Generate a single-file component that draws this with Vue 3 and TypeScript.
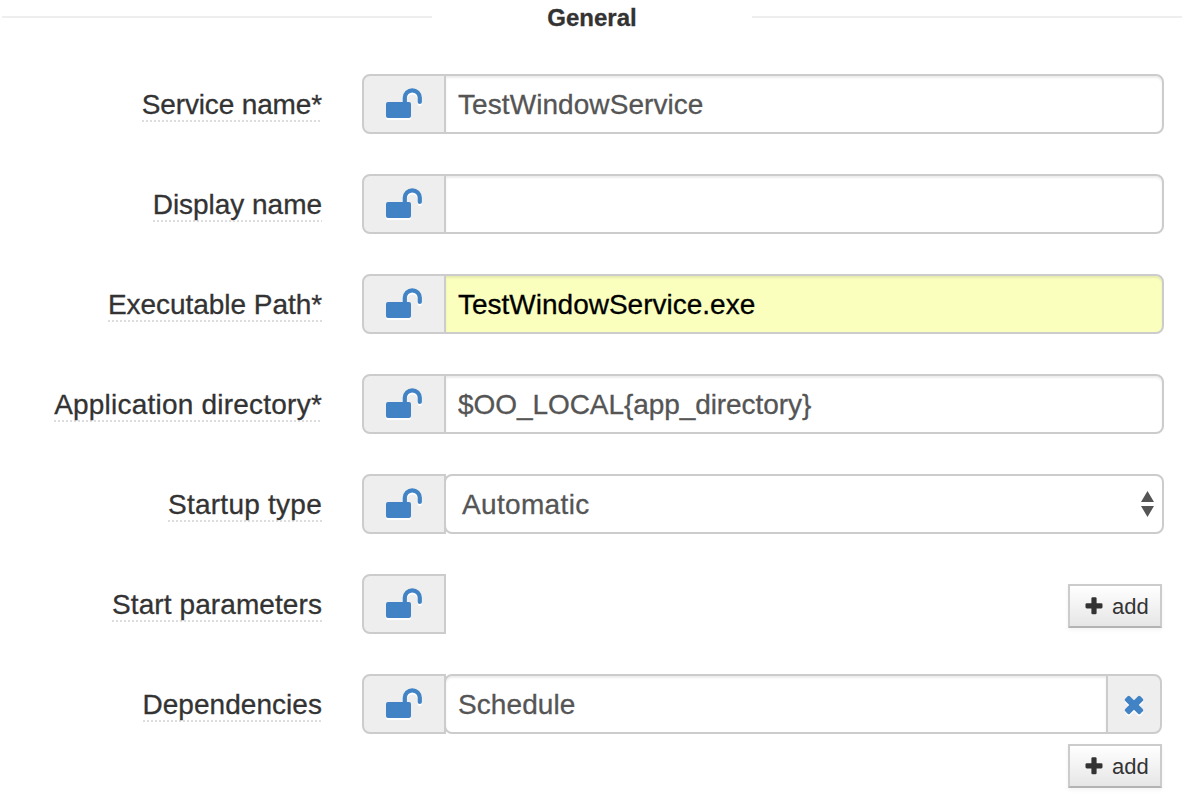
<script setup lang="ts">
import { ref } from 'vue'

type Kind = 'text' | 'select' | 'params' | 'list'

interface Field {
  label: string
  kind: Kind
  value: string
  tracking: number
  valueTracking: number
  highlighted?: boolean
}

const fields = ref<Field[]>([
  { label: 'Service name*', kind: 'text', value: 'TestWindowService', tracking: -0.14, valueTracking: 0.07 },
  { label: 'Display name', kind: 'text', value: '', tracking: -0.03, valueTracking: 0 },
  { label: 'Executable Path*', kind: 'text', value: 'TestWindowService.exe', tracking: -0.05, valueTracking: 0, highlighted: true },
  { label: 'Application directory*', kind: 'text', value: '$OO_LOCAL{app_directory}', tracking: 0.22, valueTracking: -0.07 },
  { label: 'Startup type', kind: 'select', value: 'Automatic', tracking: 0.25, valueTracking: 0.34 },
  { label: 'Start parameters', kind: 'params', value: '', tracking: 0.09, valueTracking: 0 },
  { label: 'Dependencies', kind: 'list', value: 'Schedule', tracking: 0.04, valueTracking: 0.08 },
])
</script>

<template>
  <form class="form" @submit.prevent>
    <header class="section">
      <span class="rule"></span>
      <h2>General</h2>
      <span class="rule"></span>
    </header>

    <div v-for="field in fields" :key="field.label" class="row">
      <div class="label-cell">
        <label :style="{ letterSpacing: field.tracking + 'px' }">{{ field.label }}</label>
      </div>
      <div class="controls">
        <div class="group" :class="'group-' + field.kind">
          <span class="addon lock">
            <svg class="icon" width="40" height="34" viewBox="0 0 40 34">
              <rect x="2" y="15" width="25" height="16" rx="2" fill="#4183c4" />
              <path d="M20.8 16V10.8a7.5 7.5 0 0 1 15 0V15" fill="none" stroke="#4183c4" stroke-width="4.2" stroke-linecap="round" />
            </svg>
          </span>
          <input
            v-if="field.kind === 'text' || field.kind === 'list'"
            v-model="field.value"
            class="control"
            :class="{ highlighted: field.highlighted }"
            :style="{ letterSpacing: field.valueTracking + 'px' }"
            type="text"
            spellcheck="false"
          />
          <div v-else-if="field.kind === 'select'" class="control select">
            <span :style="{ letterSpacing: field.valueTracking + 'px' }">{{ field.value }}</span>
            <svg width="14" height="26" viewBox="0 0 14 26">
              <path d="M6.500 0 13 11H0Z M0 15H13L6.500 26Z" fill="#555" />
            </svg>
          </div>
          <button v-if="field.kind === 'params'" class="add" type="button">
            <svg width="18" height="18" viewBox="0 0 18 18">
              <rect x="6.400" y="0.300" width="5.200" height="17" rx="1.300" fill="#333" />
              <rect x="0.500" y="6.200" width="17" height="5.200" rx="1.300" fill="#333" />
            </svg>
            <span>add</span>
          </button>
          <span v-if="field.kind === 'list'" class="addon remove">
            <svg class="icon" width="22" height="22" viewBox="0 0 22 22">
              <g transform="translate(11 12) rotate(45)" fill="#4183c4">
                <rect x="-10.700" y="-3.300" width="21.400" height="6.600" rx="1.600" />
                <rect x="-3.300" y="-10.700" width="6.600" height="21.400" rx="1.600" />
              </g>
            </svg>
          </span>
        </div>
        <button v-if="field.kind === 'list'" class="add below" type="button">
          <svg width="18" height="18" viewBox="0 0 18 18">
            <rect x="6.400" y="0.300" width="5.200" height="17" rx="1.300" fill="#333" />
            <rect x="0.500" y="6.200" width="17" height="5.200" rx="1.300" fill="#333" />
          </svg>
          <span>add</span>
        </button>
      </div>
    </div>
  </form>
</template>

<style>
body {
  margin: 0;
  background: #fff;
}
</style>

<style scoped>
.form {
  width: 1190px;
  height: 812px;
  overflow: hidden;
  font-family: 'Liberation Sans', Arial, sans-serif;
  font-size: 28px;
  line-height: 40px;
  color: #333;
  -webkit-text-stroke: 0.3px currentColor;
}

.section {
  display: flex;
  align-items: center;
  width: 1180px;
  height: 34px;
  margin-left: 2px;
}

.rule {
  width: 430px;
  height: 2px;
  background: #eee;
}

h2 {
  flex: 1;
  margin: 0;
  padding-top: 2px;
  font-size: 24px;
  line-height: 34px;
  font-weight: bold;
  text-align: center;
}

.row {
  display: flex;
  align-items: flex-start;
  height: 60px;
  margin-top: 40px;
}

.label-cell {
  display: flex;
  justify-content: flex-end;
  width: 322px;
  margin-right: 40px;
  padding-top: 10px;
}

label {
  height: 38px;
  line-height: 42px;
  white-space: nowrap;
  background: repeating-linear-gradient(90deg, #ddd 0 2px, transparent 2px 4px) bottom / 100% 2px no-repeat;
}

.controls {
  display: flex;
  flex-direction: column;
  width: 802px;
}

.group {
  display: flex;
  align-items: stretch;
  height: 60px;
}

.group-params,
.group-list {
  width: 800px;
}

.addon {
  display: flex;
  align-items: center;
  justify-content: center;
  flex: none;
  box-sizing: border-box;
  border: 2px solid #ccc;
  background: #eee;
}

.lock {
  width: 84px;
  border-radius: 8px 0 0 8px;
}

.remove {
  width: 56px;
  margin-left: -2px;
  border-radius: 0 8px 8px 0;
}

.icon {
  display: block;
  filter: drop-shadow(0 2px 0 #fff);
}

.control {
  flex: 1;
  min-width: 0;
  box-sizing: border-box;
  height: 60px;
  margin: 0 0 0 -2px;
  padding: 2px 12px 0;
  border: 2px solid #ccc;
  border-radius: 0 8px 8px 0;
  outline: none;
  background: #fff;
  box-shadow: inset 0 2px 2px rgba(0, 0, 0, 0.075);
  color: #555;
  font: inherit;
}

.control.highlighted {
  background: #faffbd;
  color: #000;
}

.group-list .control {
  border-radius: 8px 0 0 8px;
}

.control.select {
  display: flex;
  align-items: center;
  justify-content: space-between;
  padding: 0 7px 0 16px;
  border-radius: 8px;
  box-shadow: none;
}

.select span {
  padding-top: 2px;
}

.add {
  display: flex;
  align-items: center;
  gap: 9px;
  box-sizing: border-box;
  width: 94px;
  height: 44px;
  padding: 0 0 0 15px;
  border: 2px solid #ccc;
  border-bottom-color: #b3b3b3;
  background: linear-gradient(#fff, #e6e6e6);
  box-shadow: 0 2px 4px rgba(0, 0, 0, 0.05);
  color: #333;
  font: 22px / 36px 'Liberation Sans', Arial, sans-serif;
  -webkit-text-stroke: 0;
}

.add span {
  padding-top: 2px;
}

.group-params .add {
  margin: 10px 0 0 auto;
}

.add.below {
  flex: none;
  margin: 10px 0 0 706px;
}
</style>
